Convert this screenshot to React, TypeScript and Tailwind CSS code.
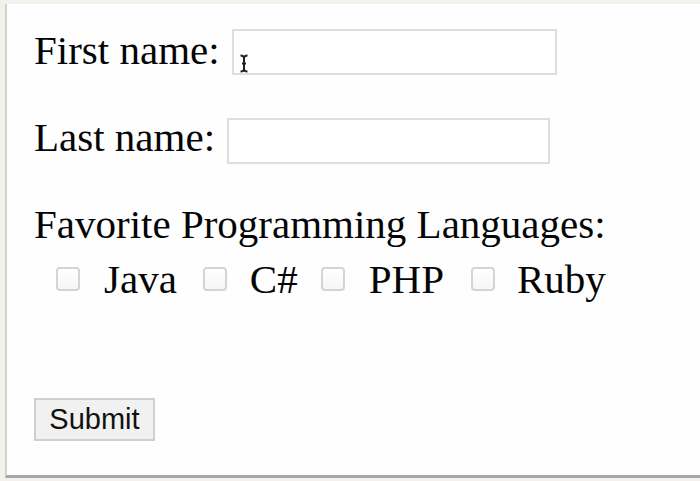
import React from "react";

const serif = { fontFamily: '"Liberation Serif", "Times New Roman", serif' };

function Check({ label, ml, gap }: { label: string; ml: string; gap: string }) {
  return (
    <div className={`flex items-start ${ml}`}>
      <input
        type="checkbox"
        className="mt-[11px] h-[24px] w-[24px] appearance-none rounded-[4px] border-2 border-[#d4d4d4] bg-gradient-to-b from-white to-[#f6f6f6]"
      />
      <span className={gap}>{label}</span>
    </div>
  );
}

export default function App() {
  return (
    <div className="h-[481px] w-[700px] overflow-hidden bg-[#f3f1ec] pl-[5px] pt-[4px]">
      <div
        className="h-[474px] w-[720px] border-b-[3px] border-l-2 border-b-[#a5a5a5] border-l-[#d3d1cd] bg-[#fefefe] pl-[27px] text-[41px] leading-[46px] text-[#050505]"
        style={serif}
      >
        <div className="flex items-start pt-[23px]">
          <span>First name:</span>
          <div className="relative ml-[12px] mt-[2px]">
            <input
              type="text"
              className="block h-[46px] w-[325px] border-2 border-[#dedede] bg-white outline-none"
            />
            <svg
              className="absolute left-[7px] top-[25px]"
              width="10"
              height="19"
              viewBox="0 0 10 19"
            >
              <path
                d="M1.5 1.5 Q5 1.5 5 4 L5 15 Q5 17.5 1.5 17.5 M8.5 1.5 Q5 1.5 5 4 M5 15 Q5 17.5 8.5 17.5 M3 9.5 L7 9.5"
                stroke="#222"
                strokeWidth="2"
                fill="none"
              />
            </svg>
          </div>
        </div>
        <div className="mt-[39px] flex items-start">
          <span>Last name:</span>
          <input
            type="text"
            className="ml-[12px] mt-[4px] block h-[46px] w-[323px] border-2 border-[#dedede] bg-white outline-none"
          />
        </div>
        <div className="mt-[37px]">Favorite Programming Languages:</div>
        <div className="mt-[9px] flex items-start">
          <Check label="Java" ml="ml-[22px]" gap="ml-[24px]" />
          <Check label="C#" ml="ml-[26px]" gap="ml-[23px]" />
          <Check label="PHP" ml="ml-[23px]" gap="ml-[24px]" />
          <Check label="Ruby" ml="ml-[27px]" gap="ml-[22px]" />
        </div>
        <div className="mt-[96px]">
          <button
            className="flex h-[43px] w-[121px] items-center justify-center border-2 border-[#cfcfcf] bg-[#f1f1f1] text-[29px] leading-none text-[#111]"
            style={{ fontFamily: '"Liberation Sans", Arial, sans-serif' }}
          >
            Submit
          </button>
        </div>
      </div>
    </div>
  );
}
